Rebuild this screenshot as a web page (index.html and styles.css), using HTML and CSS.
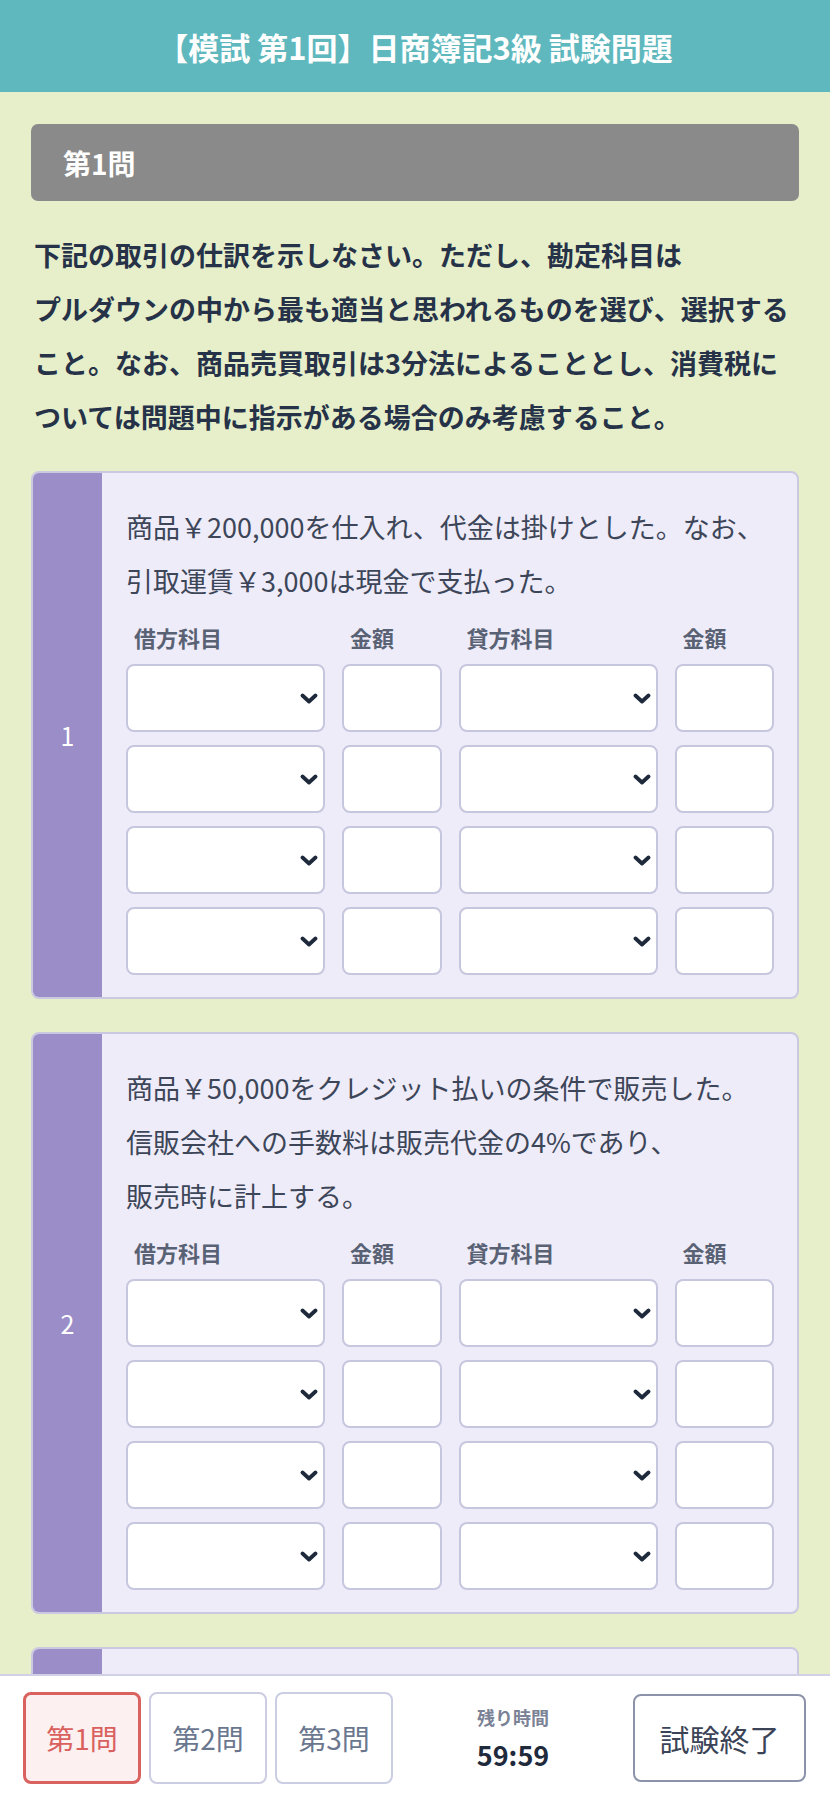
FILE: index.html
```html
<!DOCTYPE html>
<html lang="ja">
<head>
    <meta charset="UTF-8">
    <meta name="viewport" content="width=device-width, initial-scale=1.0">
    <title>【模試 第1回】日商簿記3級 試験問題</title>
    <link rel="stylesheet" href="styles.css">
</head>
<body>
    <div class="header">
        <h1>【模試 第1回】日商簿記3級 試験問題</h1>
    </div>

    <div class="container">
        <div class="section-title">第1問</div>
        <p class="instruction">下記の取引の仕訳を示しなさい。ただし、勘定科目は<br>プルダウンの中から最も適当と思われるものを選び、選択すること。なお、商品売買取引は3分法によることとし、消費税については問題中に指示がある場合のみ考慮すること。</p>

        <!-- 問1 -->
        <div class="question">
            <div class="question-no">1</div>
            <div class="question-body">
                <p class="question-text">商品￥200,000を仕入れ、代金は掛けとした。なお、<br>引取運賃￥3,000は現金で支払った。</p>
                <div class="entry-head">
                    <span>借方科目</span><span>金額</span><span>貸方科目</span><span>金額</span>
                </div>
                <div class="entry-grid" data-rows="4"></div>
            </div>
        </div>

        <!-- 問2 -->
        <div class="question">
            <div class="question-no">2</div>
            <div class="question-body">
                <p class="question-text">商品￥50,000をクレジット払いの条件で販売した。<br>信販会社への手数料は販売代金の4%であり、<br>販売時に計上する。</p>
                <div class="entry-head">
                    <span>借方科目</span><span>金額</span><span>貸方科目</span><span>金額</span>
                </div>
                <div class="entry-grid" data-rows="4"></div>
            </div>
        </div>

        <!-- 問3 -->
        <div class="question">
            <div class="question-no">3</div>
            <div class="question-body">
                <p class="question-text">備品￥300,000を購入し、代金は翌月末に支払うこととした。</p>
                <div class="entry-head">
                    <span>借方科目</span><span>金額</span><span>貸方科目</span><span>金額</span>
                </div>
                <div class="entry-grid" data-rows="4"></div>
            </div>
        </div>
    </div>

    <div class="footer">
        <div class="nav-group">
            <button class="nav-btn active">第1問</button>
            <button class="nav-btn">第2問</button>
            <button class="nav-btn">第3問</button>
        </div>
        <div class="timer">
            <div class="timer-label">残り時間</div>
            <div class="timer-value" id="timer">59:59</div>
        </div>
        <button class="end-btn">試験終了</button>
    </div>

    <script>
        document.addEventListener('DOMContentLoaded', function() {
            const accounts = ['', '現金', '当座預金', '売掛金', 'クレジット売掛金', '備品', '仕入', '買掛金', '未払金', '売上', '支払手数料'];
            const chevron = '<svg class="chevron" width="18" height="11" viewBox="0 0 18 11"><path d="M2.5 2.5 L9 8.5 L15.5 2.5" fill="none" stroke="#1e293b" stroke-width="3.8" stroke-linecap="round" stroke-linejoin="round"/></svg>';

            function selectBox() {
                let options = accounts.map(function(a) { return '<option>' + a + '</option>'; }).join('');
                return '<div class="select-wrap"><select class="account">' + options + '</select>' + chevron + '</div>';
            }

            // 仕訳の入力欄を組み立てる
            document.querySelectorAll('.entry-grid').forEach(function(grid) {
                const rows = parseInt(grid.dataset.rows, 10);
                let html = '';
                for (let i = 0; i < rows; i++) {
                    html += selectBox();
                    html += '<input type="text" class="amount" inputmode="numeric">';
                    html += selectBox();
                    html += '<input type="text" class="amount" inputmode="numeric">';
                }
                grid.innerHTML = html;
            });
        });
    </script>
</body>
</html>
```

FILE: styles.css
```css
html, body {
    margin: 0;
    padding: 0;
    font-family: "Noto Sans CJK JP", "Noto Sans", sans-serif;
    background-color: #e6efca;
    color: #263248;
}
.header {
    height: 92px;
    display: flex;
    justify-content: center;
    align-items: center;
    background-color: #5eb8be;
}
.header h1 {
    margin: 0;
    color: #fff;
    font-size: 31px;
    font-weight: 700;
}
.container {
    padding: 32px 31px 220px 31px;
}
.section-title {
    height: 77px;
    display: flex;
    align-items: center;
    padding: 0 32px;
    background-color: #8a8a8a;
    border-radius: 7px;
    color: #fff;
    font-size: 28px;
    font-weight: 700;
}
.instruction {
    margin: 27px 0 27px 3px;
    font-size: 27px;
    font-weight: 700;
    line-height: 54px;
    color: #263248;
}
.question {
    display: flex;
    margin-bottom: 33px;
    background-color: #eeecf8;
    border: 2px solid #cbc9e2;
    border-radius: 8px;
    overflow: hidden;
}
.question-no {
    width: 69px;
    flex-shrink: 0;
    display: flex;
    justify-content: center;
    align-items: center;
    background-color: #9b8dc8;
    color: #fff;
    font-size: 25px;
}
.question-body {
    flex: 1;
    padding: 27px 23px 22px 24px;
}
.question-text {
    margin: 0 0 13px 0;
    font-size: 27px;
    line-height: 54px;
    color: #3d4659;
}
.entry-head,
.entry-grid {
    display: grid;
    grid-template-columns: 2fr 1fr 2fr 1fr;
    column-gap: 17px;
}
.entry-head {
    margin-bottom: 10px;
}
.entry-head span {
    padding-left: 8px;
    font-size: 22px;
    font-weight: 700;
    line-height: 33px;
    color: #596275;
}
.entry-grid {
    row-gap: 13px;
}
.select-wrap {
    position: relative;
}
.account,
.amount {
    display: block;
    width: 100%;
    height: 68px;
    box-sizing: border-box;
    border: 2px solid #c6c7de;
    border-radius: 8px;
    background-color: #fff;
    font-family: inherit;
    font-size: 22px;
    color: #263248;
    padding: 0 10px;
}
.account {
    -webkit-appearance: none;
    appearance: none;
    color: transparent;
}
.chevron {
    position: absolute;
    right: 7px;
    top: 29px;
    pointer-events: none;
}
.footer {
    position: fixed;
    left: 0;
    right: 0;
    bottom: 0;
    height: 126px;
    box-sizing: border-box;
    display: flex;
    align-items: center;
    padding: 0 24px 0 23px;
    background-color: #fff;
    border-top: 2px solid #d0d1e6;
}
.nav-group {
    display: flex;
    gap: 8px;
}
.nav-btn {
    width: 118px;
    height: 92px;
    border: 2px solid #cbcde3;
    border-radius: 8px;
    background-color: #fff;
    font-family: inherit;
    font-size: 28px;
    color: #6b778f;
    cursor: pointer;
}
.nav-btn.active {
    border: 3px solid #d9625f;
    background-color: #fcf0f0;
    color: #d9605e;
}
.timer {
    flex: 1;
    text-align: center;
}
.timer-label {
    font-size: 18px;
    font-weight: 700;
    color: #7b8296;
    line-height: 26px;
}
.timer-value {
    margin-top: 8px;
    font-size: 27px;
    font-weight: 700;
    color: #1f2a3c;
    line-height: 34px;
}
.end-btn {
    width: 173px;
    height: 88px;
    border: 2px solid #8b92a9;
    border-radius: 8px;
    background-color: #fff;
    font-family: inherit;
    font-size: 30px;
    color: #3b4457;
    cursor: pointer;
}
```
